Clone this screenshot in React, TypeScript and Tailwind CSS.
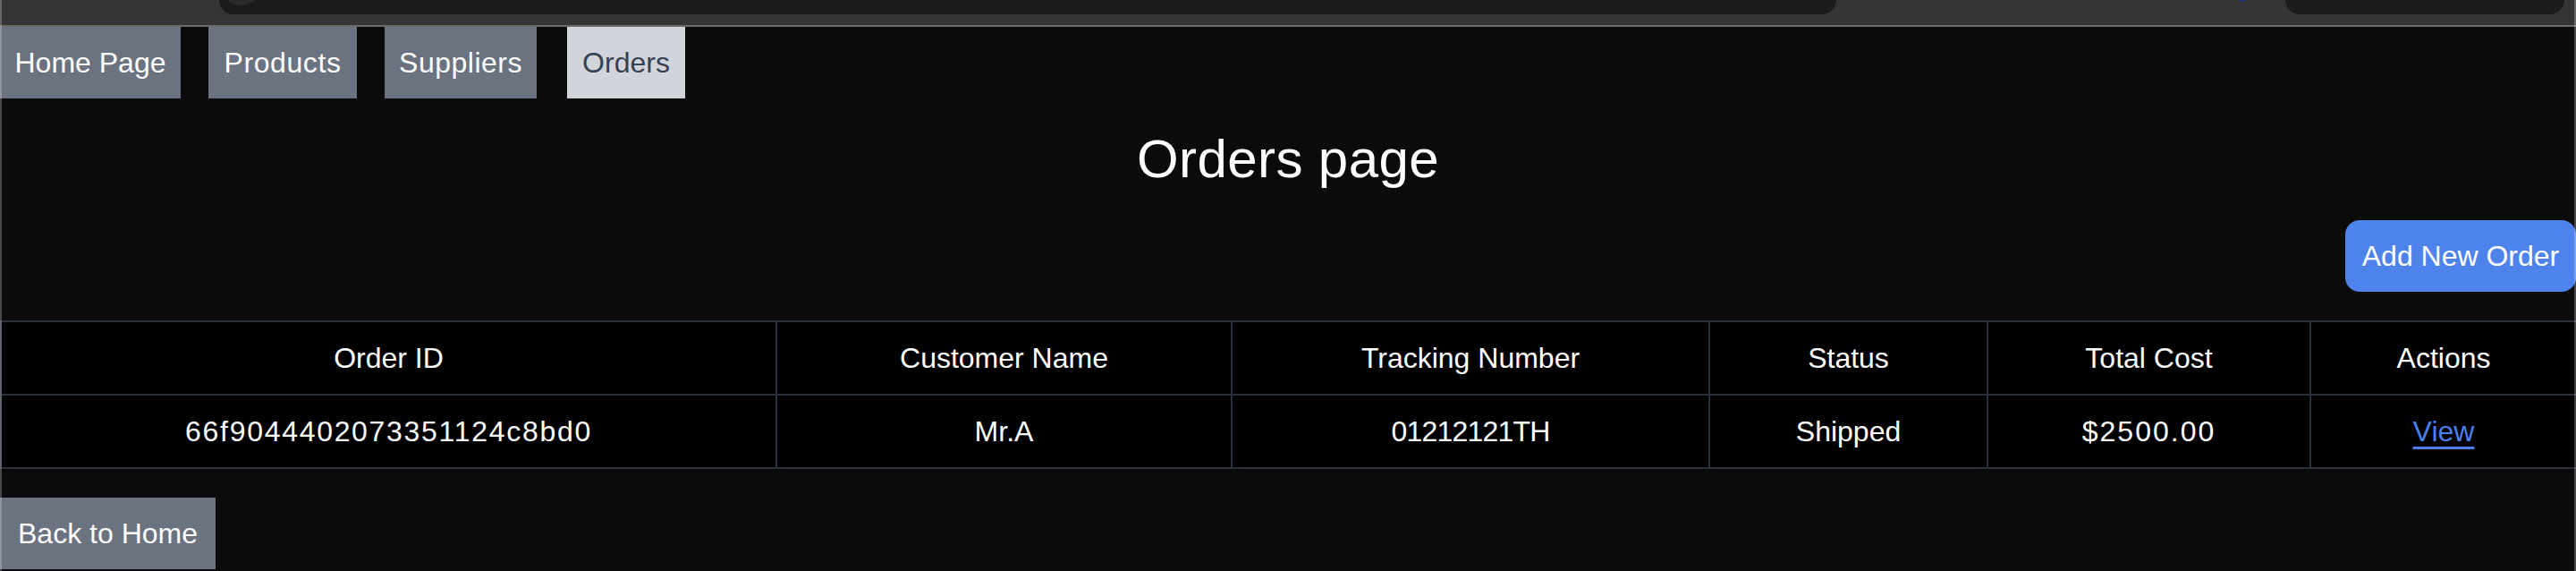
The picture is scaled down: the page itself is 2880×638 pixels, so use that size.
import React from "react";

const cols = [
  { w: "w-[867px]", h: "Order ID", v: "66f9044402073351124c8bd0", t: "tracking-[1.7px]" },
  { w: "w-[509px]", h: "Customer Name", v: "Mr.A", t: "" },
  { w: "w-[534px]", h: "Tracking Number", v: "01212121TH", t: "tracking-[-0.8px]" },
  { w: "w-[311px]", h: "Status", v: "Shipped", t: "" },
  { w: "w-[361px]", h: "Total Cost", v: "$2500.00", t: "tracking-[2px]" },
  { w: "w-[298px]", h: "Actions", v: "", t: "" },
];

export default function App() {
  return (
    <div
      className="relative min-h-[638px] bg-[#0b0b0b] text-white"
      style={{ fontFamily: '"Liberation Sans", Arial, sans-serif' }}
    >
      {/* browser chrome */}
      <div className="flex h-[28px] items-start overflow-hidden bg-[#353535]">
        <div className="ml-[245px] relative h-[16px] w-[1808px] rounded-b-[18px] bg-[#1b1b1b]">
          <div className="absolute left-[2px] top-[-40px] h-[46px] w-[46px] rounded-full bg-[#2a2a2a]" />
        </div>
        <div className="ml-[448px] mt-[-10px] h-[12px] w-[12px] rounded-full bg-[#1c3a78]" />
        <div className="ml-[42px] h-[16px] w-[312px] rounded-b-[18px] bg-[#1b1b1b]" />
      </div>
      <div className="h-[2px] bg-[#6a6a6a]" />

      {/* nav */}
      <nav className="flex">
        <button className="h-[80px] w-[202px] bg-[#6b7280] text-center text-[32px] leading-[48px] text-white">Home Page</button>
        <button className="ml-[31px] h-[80px] w-[166px] bg-[#6b7280] text-center text-[32px] leading-[48px] tracking-[0.6px] text-white">Products</button>
        <button className="ml-[31px] h-[80px] w-[170px] bg-[#6b7280] text-center text-[32px] leading-[48px] tracking-[0.5px] text-white">Suppliers</button>
        <button className="ml-[34px] h-[80px] w-[132px] bg-[#d1d5db] text-center text-[32px] leading-[48px] text-[#374151]">Orders</button>
      </nav>

      <h1 className="mt-8 text-center text-[60px] leading-[72px] tracking-[0.4px] text-white">Orders page</h1>

      <div className="mt-8 flex justify-end">
        <button className="h-[80px] w-[258px] rounded-[16px] bg-[#4f83ec] text-center text-[32px] leading-[48px] text-white">
          Add New Order
        </button>
      </div>

      <table className="mt-8 w-full table-fixed border-collapse border-2 border-[#2b313c] bg-black text-[32px] leading-[48px]">
        <colgroup>
          {cols.map((c) => (
            <col key={c.h} className={c.w} />
          ))}
        </colgroup>
        <thead>
          <tr>
            {cols.map((c) => (
              <th key={c.h} className="border-2 border-[#2b313c] py-4 text-center font-normal">
                {c.h}
              </th>
            ))}
          </tr>
        </thead>
        <tbody>
          <tr>
            {cols.map((c, i) => (
              <td key={c.h} className={`border-2 border-[#2b313c] py-4 text-center ${c.t}`}>
                {i === 5 ? (
                  <a href="#" className="text-[#4c80e8] underline underline-offset-[6px]">
                    View
                  </a>
                ) : (
                  c.v
                )}
              </td>
            ))}
          </tr>
        </tbody>
      </table>

      <button className="mt-8 block h-[80px] w-[241px] bg-[#6b7280] text-center text-[32px] leading-[48px] text-white">
        Back to Home
      </button>

      <div className="pointer-events-none absolute inset-0 border-x-2 border-white/25" />
    </div>
  );
}
